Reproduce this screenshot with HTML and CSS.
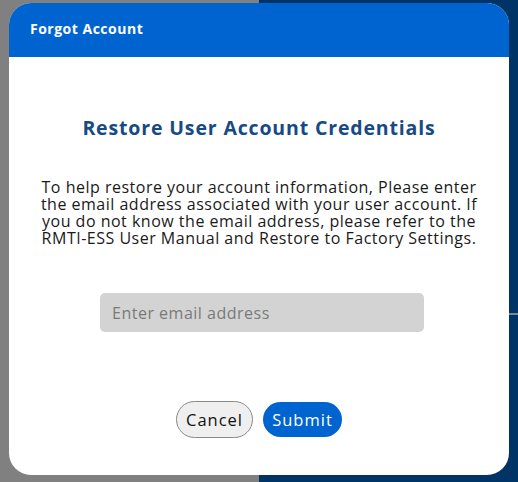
FILE: index.html
```html
<!DOCTYPE html>
<html lang="en">
<head>
<meta charset="utf-8">
<title>Forgot Account</title>
<link rel="stylesheet" href="styles.css">
</head>
<body>
<div class="dialog">
  <div class="dialog-header">Forgot Account</div>
  <div class="dialog-body">
    <h2 class="title">Restore User Account Credentials</h2>
    <p class="message">To help restore your account information, Please enter the email address associated with your user account. If you do not know the email address, please refer to the RMTI-ESS User Manual and Restore to Factory Settings.</p>
    <div class="field-row">
      <input class="email" type="text" placeholder="Enter email address">
    </div>
    <div class="actions">
      <button class="btn btn-cancel">Cancel</button>
      <button class="btn btn-submit">Submit</button>
    </div>
  </div>
</div>
</body>
</html>
```

FILE: styles.css
```css
html, body {
  margin: 0;
  padding: 0;
  height: 100%;
}
body {
  font-family: "Open Sans", "DejaVu Sans", sans-serif;
  background:
    linear-gradient(#7d8796, #7d8796) right 0 top 313px / 50% 2px no-repeat,
    linear-gradient(to right, #808080 0, #808080 50%, #003366 50%, #003366 100%);
  padding-top: 3px;
  box-sizing: border-box;
}
.dialog {
  width: 500px;
  height: 472px;
  margin: 0 auto;
  background: #ffffff;
  border-radius: 22px;
  overflow: hidden;
  display: flex;
  flex-direction: column;
}
.dialog-header {
  height: 54px;
  box-sizing: border-box;
  padding-bottom: 3px;
  background: #0064d0;
  color: #ffffff;
  font-weight: 700;
  font-size: 14px;
  padding-left: 21px;
  display: flex;
  align-items: center;
  letter-spacing: 0.5px;
}
.dialog-body {
  display: flex;
  flex-direction: column;
  align-items: center;
  padding: 0 30px;
}
.title {
  margin: 57px 0 0;
  font-size: 19.5px;
  font-weight: 700;
  color: #174a84;
  letter-spacing: 0.85px;
}
.message {
  margin: 38px 0 0;
  text-align: center;
  font-size: 16px;
  line-height: 17px;
  letter-spacing: 0.5px;
  color: #1a1a1a;
}
.field-row {
  margin-top: 46px;
  padding-left: 6px;
}
.email {
  width: 324px;
  height: 39px;
  box-sizing: border-box;
  border: none;
  border-radius: 5px;
  background: #d3d3d3;
  padding: 0 12px;
  font-family: inherit;
  font-size: 16px;
  letter-spacing: 0.5px;
  color: #333;
  outline: none;
}
.email::placeholder {
  color: #7a7a7a;
}
.actions {
  margin-top: 69px;
  display: flex;
  align-items: center;
  gap: 10px;
}
.btn {
  font-family: inherit;
  font-size: 16.5px;
  letter-spacing: 1px;
  border-radius: 999px;
  cursor: pointer;
  padding: 0;
}
.btn-cancel {
  width: 77px;
  height: 37px;
  background: #efefef;
  border: 1px solid #8a8a8a;
  color: #111;
}
.btn-submit {
  width: 79px;
  height: 35px;
  background: #0064d0;
  border: none;
  color: #ffffff;
}
```
